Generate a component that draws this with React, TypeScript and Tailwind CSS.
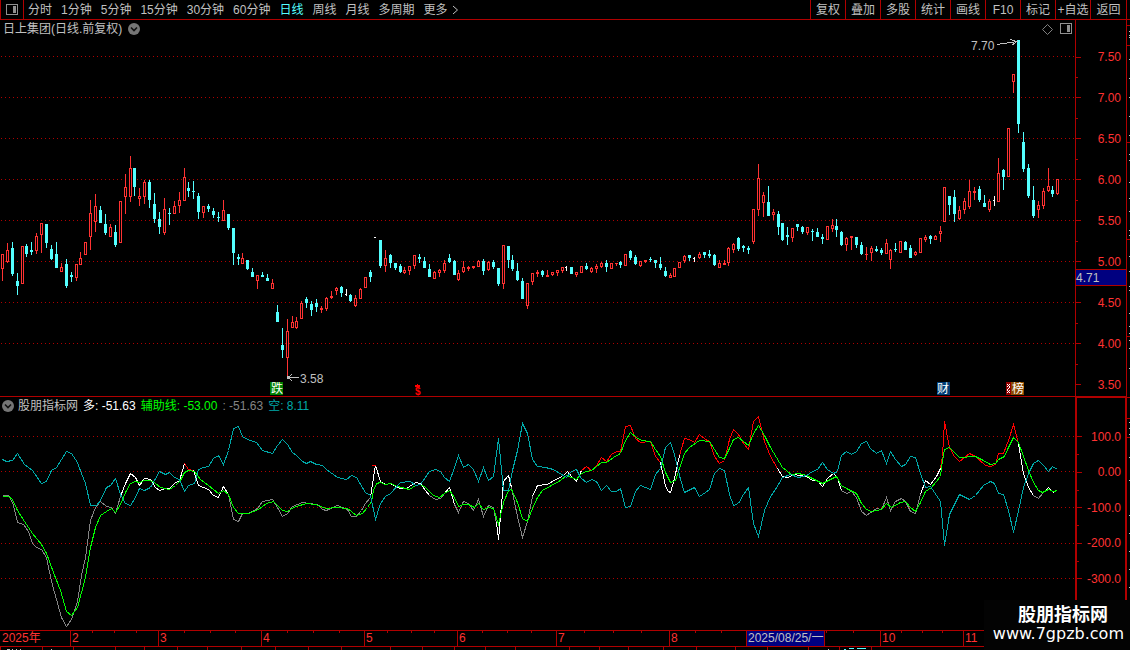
import React from "react";

type Kind = "up" | "down" | "flat";
// x, high, body top, body bottom, low
type Candle = [number, number, number, number, number];

const up: Candle[] = [
  [2, 254, 254, 268, 280], [7, 243, 250, 261, 262], [22, 246, 246, 283, 283], [36, 233, 236, 250, 253], [41, 223, 223, 234, 252],
  [61, 263, 267, 271, 271], [76, 264, 264, 277, 280], [80, 252, 258, 264, 264], [85, 242, 242, 254, 254], [90, 200, 213, 236, 249],
  [95, 194, 206, 221, 231], [110, 224, 227, 236, 236], [120, 201, 201, 242, 242], [125, 174, 187, 196, 213], [130, 156, 168, 196, 201],
  [139, 188, 196, 198, 205], [144, 180, 182, 196, 203], [164, 198, 209, 232, 234], [174, 201, 206, 213, 213], [179, 192, 200, 205, 212],
  [184, 168, 177, 200, 200], [203, 206, 206, 212, 217], [223, 200, 210, 220, 220], [242, 253, 258, 263, 263], [257, 275, 275, 280, 288],
  [272, 279, 283, 288, 288], [287, 319, 331, 357, 375], [292, 316, 322, 327, 327], [296, 317, 321, 327, 328], [301, 301, 303, 318, 318],
  [321, 306, 308, 309, 312], [326, 297, 298, 308, 310], [331, 291, 296, 297, 298], [336, 287, 288, 290, 294], [355, 295, 298, 305, 306],
  [360, 288, 289, 298, 298], [365, 277, 277, 287, 287], [385, 250, 258, 265, 271], [404, 267, 270, 272, 273], [409, 266, 266, 270, 274],
  [414, 255, 255, 265, 268], [434, 271, 272, 278, 278], [439, 269, 270, 272, 276], [444, 260, 263, 270, 272], [458, 270, 273, 279, 280],
  [463, 261, 267, 271, 272], [468, 266, 267, 268, 270], [473, 266, 266, 267, 268], [478, 260, 261, 266, 266], [488, 261, 262, 269, 270],
  [503, 245, 245, 283, 288], [527, 283, 283, 305, 308], [532, 273, 273, 281, 284], [537, 270, 272, 273, 276], [547, 270, 275, 276, 276],
  [552, 272, 272, 274, 275], [557, 270, 270, 272, 275], [562, 267, 267, 270, 272], [576, 272, 272, 274, 276], [581, 266, 266, 272, 272],
  [591, 267, 268, 271, 272], [596, 264, 266, 268, 272], [601, 262, 263, 266, 267], [611, 263, 263, 268, 268], [616, 263, 263, 263, 265],
  [625, 254, 254, 265, 265], [640, 261, 261, 265, 266], [645, 260, 260, 261, 262], [670, 273, 275, 277, 277], [674, 268, 268, 276, 276],
  [679, 262, 262, 267, 267], [684, 255, 256, 260, 262], [699, 252, 254, 257, 258], [719, 260, 263, 267, 267], [724, 260, 263, 264, 264],
  [728, 247, 248, 262, 265], [733, 243, 244, 249, 252], [753, 209, 209, 241, 243], [758, 164, 178, 209, 215], [763, 192, 195, 202, 216],
  [773, 209, 212, 214, 219], [792, 228, 228, 237, 241], [807, 227, 227, 232, 234], [827, 226, 226, 239, 239], [832, 219, 225, 228, 231],
  [846, 237, 238, 244, 250], [851, 236, 236, 237, 249], [866, 247, 254, 254, 259], [871, 246, 248, 252, 260], [886, 239, 243, 253, 253],
  [890, 249, 250, 259, 268], [900, 241, 241, 252, 252], [915, 251, 252, 254, 255], [920, 238, 238, 252, 252], [925, 235, 237, 239, 241],
  [935, 235, 236, 239, 239], [940, 226, 231, 233, 241], [944, 187, 187, 221, 221], [959, 206, 210, 218, 219], [964, 198, 201, 209, 213],
  [969, 180, 191, 206, 208], [974, 187, 191, 192, 199], [989, 199, 201, 209, 211], [998, 158, 173, 201, 201], [1008, 128, 128, 176, 176],
  [1013, 74, 74, 81, 92], [1038, 201, 205, 209, 217], [1043, 188, 191, 205, 208], [1048, 168, 186, 190, 191], [1057, 179, 179, 193, 194],
];

const down: Candle[] = [
  [12, 242, 248, 273, 275], [17, 273, 281, 285, 294], [26, 244, 246, 253, 256], [31, 242, 250, 251, 254], [46, 224, 224, 242, 247],
  [51, 245, 249, 258, 259], [56, 242, 254, 267, 267], [66, 259, 264, 285, 287], [71, 272, 275, 276, 281], [100, 206, 210, 222, 222],
  [105, 214, 224, 232, 234], [115, 225, 232, 244, 246], [134, 168, 168, 186, 195], [149, 180, 182, 199, 207], [154, 193, 204, 218, 222],
  [159, 212, 219, 226, 233], [169, 208, 213, 213, 224], [188, 182, 188, 190, 196], [193, 181, 191, 191, 198], [198, 193, 196, 211, 218],
  [208, 204, 206, 208, 211], [213, 208, 211, 214, 217], [218, 212, 217, 217, 221], [228, 214, 214, 227, 229], [233, 228, 228, 252, 264],
  [238, 254, 257, 258, 264], [247, 260, 260, 268, 269], [252, 268, 272, 276, 276], [262, 272, 275, 276, 276], [267, 274, 278, 280, 280],
  [277, 305, 312, 321, 321], [282, 328, 345, 349, 357], [306, 297, 299, 302, 307], [311, 301, 304, 309, 315], [316, 299, 303, 306, 311],
  [341, 286, 287, 292, 296], [350, 294, 295, 300, 301], [370, 270, 272, 276, 281], [380, 240, 240, 265, 267], [390, 254, 255, 262, 267],
  [395, 263, 263, 267, 269], [400, 264, 266, 271, 272], [419, 254, 257, 258, 262], [424, 257, 261, 267, 267], [429, 264, 269, 276, 276],
  [449, 254, 258, 261, 262], [454, 260, 261, 274, 274], [483, 259, 261, 270, 274], [493, 260, 262, 266, 268], [498, 268, 268, 283, 285],
  [508, 246, 246, 259, 267], [512, 255, 260, 268, 270], [517, 263, 271, 279, 280], [522, 278, 281, 298, 298], [542, 270, 271, 274, 276],
  [571, 267, 267, 273, 273], [586, 263, 266, 268, 269], [606, 260, 263, 266, 271], [620, 261, 262, 264, 267], [630, 250, 251, 257, 259],
  [635, 255, 257, 263, 264], [650, 257, 259, 259, 261], [655, 260, 260, 262, 267], [660, 257, 264, 267, 269], [665, 267, 271, 275, 276],
  [689, 255, 255, 257, 260], [704, 252, 252, 254, 257], [709, 250, 254, 255, 257], [714, 254, 255, 264, 265], [738, 237, 238, 248, 250],
  [743, 245, 246, 247, 251], [748, 246, 248, 249, 253], [768, 186, 202, 215, 215], [778, 211, 214, 226, 234], [782, 223, 223, 239, 240],
  [787, 227, 235, 236, 244], [797, 224, 224, 226, 230], [802, 226, 227, 231, 233], [812, 229, 231, 231, 240], [817, 228, 232, 236, 236],
  [822, 234, 237, 238, 243], [836, 219, 226, 229, 236], [841, 231, 232, 244, 245], [856, 237, 237, 244, 247], [861, 242, 245, 253, 254],
  [876, 246, 249, 250, 251], [881, 248, 250, 252, 254], [895, 243, 249, 249, 251], [905, 241, 242, 249, 249], [910, 245, 248, 257, 257],
  [930, 235, 236, 238, 243], [949, 196, 196, 204, 214], [954, 190, 197, 213, 221], [979, 186, 189, 199, 201], [984, 195, 203, 206, 206],
  [1003, 169, 170, 176, 189], [1018, 40, 40, 123, 132], [1023, 132, 142, 168, 171], [1028, 164, 168, 195, 197], [1033, 186, 200, 215, 217],
  [1052, 186, 190, 193, 196],
];

const flat: Candle[] = [
  [346, 289, 294, 294, 295], [375, 237, 237, 237, 237], [566, 266, 267, 267, 270],
  [694, 257, 258, 258, 261], [994, 196, 200, 200, 205],
];

const SHORT_LINE =
  "2,459 6,461 12,460 17,453 24,464 32,470 41,483 46,481 51,470 56,467 61,459 66,451 71,453 77,462 81,473 85,483 90,505 96,505 100,500 106,487 110,485 115,478 120,494 125,503 130,505 135,497 139,488 144,490 150,487 159,471 165,474 169,472 174,477 179,479 184,491 188,485 194,483 198,469 203,467 208,466 213,458 218,455 223,464 228,450 233,428 238,426 242,436 247,439 256,442 262,450 272,453 277,445 282,439 287,444 292,452 296,455 302,461 306,463 310,461 316,464 322,465 326,469 337,477 346,479 351,475 356,477 365,492 370,495 375,519 380,503 385,496 390,493 400,482 410,481 415,485 420,484 429,471 435,469 440,471 444,477 449,481 454,467 458,455 463,467 468,464 473,469 478,481 483,467 488,480 493,476 498,438 503,490 508,490 512,470 517,450 522,423 527,433 532,459 537,466 545,467 553,469 566,477 571,471 576,469 580,477 586,482 591,479 596,481 601,490 606,485 611,491 616,491 620,488 625,507 630,506 635,491 640,485 650,489 655,474 660,468 665,447 670,442 674,454 680,479 684,492 694,487 699,496 705,492 709,489 714,473 719,468 724,470 729,494 733,505 738,503 743,494 748,487 753,523 758,536 764,510 770,496 775,489 782,477 790,474 798,477 806,475 812,471 817,469 822,462 827,469 833,473 837,471 841,455 846,451 851,454 856,451 861,443 866,441 870,448 876,453 881,450 886,463 890,451 895,459 901,466 905,464 910,456 915,457 920,473 925,487 930,486 940,501 944,545 949,514 955,502 959,494 969,499 975,495 983,485 990,481 994,483 998,493 1003,494 1008,510 1013,532 1018,510 1023,487 1028,473 1033,463 1038,460 1043,465 1048,471 1052,466 1057,469";

const AUX_LINE =
  "2,496 8,496 12,499 17,510 24,521 32,533 41,544 46,553 53,572 60,590 66,611 71,615 77,607 85,577 90,547 95,527 100,515 106,511 111,508 115,512 120,504 125,492 130,483 135,481 139,482 144,480 150,480 155,483 160,487 169,489 175,485 180,480 184,472 188,470 194,471 200,479 208,485 218,493 223,490 228,494 233,507 238,513 248,513 258,509 266,503 273,501 277,505 282,510 287,511 293,507 306,503 315,504 326,508 336,507 347,508 356,515 362,513 367,507 371,501 373,490 376,483 380,482 385,484 390,483 397,486 409,489 415,485 420,484 425,487 433,495 439,497 444,493 449,490 454,497 458,506 463,504 468,504 474,507 478,503 483,509 488,507 493,508 498,524 503,502 508,490 511,489 517,502 522,518 527,521 532,508 537,497 542,490 551,485 560,480 566,475 576,479 581,473 586,471 591,470 601,462 606,462 613,457 620,453 625,440 630,432 636,437 641,440 650,441 655,449 660,456 665,472 670,482 675,480 679,468 684,453 689,447 699,440 709,441 714,449 719,457 724,458 729,448 733,439 738,437 748,445 753,433 758,425 764,435 770,447 782,467 791,474 798,473 806,475 822,483 836,476 841,485 846,488 856,493 861,503 866,509 871,511 881,509 886,503 891,507 900,502 905,501 910,507 915,511 920,502 925,491 931,487 940,476 942,460 944,449 949,447 954,452 959,457 975,456 981,459 990,464 995,463 998,459 1004,456 1008,447 1013,437 1018,442 1023,456 1028,470 1033,482 1038,490 1042,492 1048,489 1053,491 1057,490";

const GRAY = "#848484";
const WHITE = "#ffffff";
const RED = "#ff0000";

const longSegments: { color: string; points: string }[] = [
  { color: GRAY, points: "2,495 8,495 12,502 15,513 17,522 23,524 28,531 32,543 36,547 41,549 46,557 51,581 61,617 66,626 71,619 77,601 81,575 85,557 90,520 95,507 100,501 106,506 111,507 115,513 120,496" },
  { color: WHITE, points: "120,496 125,483 130,473 135,477 139,485 144,478 150,479 155,487 159,490 165,488 169,488 174,483 179,480 182,470 184,463" },
  { color: RED, points: "184,463 188,469 193,470" },
  { color: WHITE, points: "193,470 198,485 203,487 208,489 213,495 218,497 223,486 228,494" },
  { color: GRAY, points: "228,494 233,519 238,521 242,513 248,513 257,508 262,501 272,499 277,507 282,516 287,513 292,506 302,502 308,503 317,504 322,509 326,510 337,505 342,507 347,509 351,516 356,516 361,510 365,503 370,497" },
  { color: WHITE, points: "370,497 373,477 375,465 380,481 385,484 390,483 397,487 401,488 406,488 415,482 420,483 425,490 429,495" },
  { color: GRAY, points: "429,495 435,499 440,498 444,493" },
  { color: WHITE, points: "444,493 449,487 454,504" },
  { color: GRAY, points: "454,504 458,512 463,501 468,503 473,510 478,499 483,516 488,505 493,507 497,529" },
  { color: WHITE, points: "496,522 498,539 503,481 508,475 511,487" },
  { color: GRAY, points: "511,487 513,497 517,516 522,537 527,521 532,496" },
  { color: WHITE, points: "532,496 537,485 547,484 555,479 562,476 567,471 571,476 576,481 581,470" },
  { color: RED, points: "581,470 586,466 591,470 596,465 601,457 606,461 611,454 616,451 620,451 625,426 630,425 635,438 640,442 650,441 655,456 660,462" },
  { color: WHITE, points: "660,462 663,476 665,486 668,491 670,492 674,478 679,455" },
  { color: RED, points: "679,455 684,438 689,439 694,442 699,434 705,439 709,441 714,456 719,463 724,460 729,439 733,429 738,434 743,443 748,449 753,421 758,416 764,441 770,456 777,468" },
  { color: WHITE, points: "777,468 782,476 788,477 793,474 806,476 812,480 817,480 822,486 827,478 833,473 837,477 841,490" },
  { color: GRAY, points: "841,490 846,493 851,491 856,497 861,511 866,515 876,508 881,509 886,497 890,510 895,501 901,498 905,501 910,511 915,513 920,494" },
  { color: WHITE, points: "920,494 925,480 930,484 936,476 940,468" },
  { color: RED, points: "940,468 942,456 944,421 949,447 954,456 959,461 969,453 975,456 985,465 990,466 995,464 998,453 1003,453 1008,440 1013,424 1018,443" },
  { color: WHITE, points: "1018,443 1023,473 1028,487 1033,495" },
  { color: GRAY, points: "1033,495 1038,498 1043,492" },
  { color: WHITE, points: "1043,492 1048,487 1053,492 1057,489" },
];

const CandleMark = ({ data, kind }: { data: Candle; kind: Kind }) => {
  const [x, high, top, bottom, low] = data;
  const color = kind === "up" ? "#ff3232" : kind === "down" ? "#54ffff" : "#ffffff";
  return (
    <g fill={color}>
      <rect x={x} y={high} width={1} height={low - high + 1} />
      <rect x={x - 1} y={top} width={kind === "flat" ? 2 : 3} height={bottom - top + 1} />
      {kind === "up" && bottom - top > 1 && (
        <rect x={x} y={top + 1} width={1} height={bottom - top - 1} fill="#000" />
      )}
    </g>
  );
};

const GridLines = ({ rows }: { rows: number[] }) => (
  <g stroke="#b00000" strokeDasharray="1 3">
    {rows.map((y) => (
      <line key={y} x1={1} x2={1075} y1={y + 0.5} y2={y + 0.5} />
    ))}
  </g>
);

const Axis = ({ labels, className }: { labels: string[]; className: string }) => (
  <ul className={"flex h-full flex-col justify-between " + className}>
    {labels.map((label, i) => (
      <li key={i} className="flex h-3 items-center justify-between leading-3">
        <span className={label ? "h-px w-[5px] bg-[#b00000]" : "h-px w-0.5 bg-[#b00000]"} />
        <span>{label}</span>
      </li>
    ))}
  </ul>
);

const PanelIcon = () => (
  <svg width="13" height="12" viewBox="0 0 13 12" shapeRendering="crispEdges" aria-hidden="true">
    <rect x="0.5" y="0.5" width="11" height="10" rx="1" fill="none" stroke="#909090" />
    <rect x="7" y="2" width="3" height="7" fill="#909090" />
  </svg>
);

const RoundChevron = () => (
  <svg width="12" height="12" viewBox="0 0 12 12" aria-hidden="true">
    <circle cx="6" cy="6" r="6" fill="#757575" />
    <path d="M3 4.5 6 7.5 9 4.5" fill="none" stroke="#101010" strokeWidth="1.6" />
  </svg>
);

const periods = ["分时", "1分钟", "5分钟", "15分钟", "30分钟", "60分钟", "日线", "周线", "月线", "多周期"];
const tools = ["复权", "叠加", "多股", "统计", "画线", "F10", "标记", "+自选", "返回"];
const months = ["2025年", "2", "3", "4", "5", "6", "7", "8"];
const minorTicks = [92, 114, 136, 184, 210, 235, 287, 313, 339, 387, 411, 434, 482, 507, 531, 584, 613, 641, 695, 721, 826, 853, 901, 922, 942];
const lowerTicks = [0, 42, 73, 115, 144, 177, 207, 241, 275, 308, 341, 390, 422, 454, 485, 515, 569, 599, 628, 663, 696, 735, 767, 808, 839, 871];
const sideTicks = [31, 35, 37, 59, 78, 97, 116, 135, 154, 160, 182, 198, 211, 230, 235, 256, 271, 286, 290, 313, 326, 333, 340, 348, 368, 422, 428, 434, 457, 480, 515, 533, 551, 569, 587];

export default function App() {
  return (
    <div className="relative flex min-h-screen flex-col overflow-hidden bg-black font-['Liberation_Sans','Noto_Sans_CJK_SC',sans-serif] text-xs leading-3 text-[#c0c0c0]">
      <header className="flex h-5 items-stretch justify-between border-b border-[#b00000] pr-[3px]">
        <nav className="flex items-stretch gap-[9px]" aria-label="周期">
          <button aria-label="侧栏" className="-mr-[5px] flex w-6 items-center justify-center border-x border-[#b00000]">
            <PanelIcon />
          </button>
          {periods.map((p) => (
            <button key={p} className={p === "日线" ? "whitespace-nowrap text-[#54ffff]" : "whitespace-nowrap"}>
              {p}
            </button>
          ))}
          <button className="flex items-center gap-1 whitespace-nowrap">
            更多
            <svg width="7" height="10" viewBox="0 0 7 10" aria-hidden="true">
              <path d="M1 1 5.5 5 1 9" fill="none" stroke="#c0c0c0" />
            </svg>
          </button>
        </nav>
        <div className="flex items-stretch border-r border-[#b00000]">
          {tools.map((t) => (
            <button key={t} className="w-[35px] whitespace-nowrap border-l border-[#b00000] last:w-9">
              {t}
            </button>
          ))}
        </div>
      </header>

      <div className="flex">
        <main className="min-w-0 flex-1">
          <section className="border-b border-[#b00000]">
            <div className="flex h-[18px] items-center justify-between pl-[3px] pr-0.5">
              <div className="flex items-center gap-1.5">
                <h1>日上集团(日线.前复权)</h1>
                <button aria-label="展开"><RoundChevron /></button>
              </div>
              <div className="flex items-center gap-[7px]">
                <svg width="11" height="11" viewBox="0 0 11 11" aria-hidden="true">
                  <path d="M5.5 0.5 10.5 5.5 5.5 10.5 0.5 5.5Z" fill="none" stroke="#808080" />
                </svg>
                <PanelIcon />
              </div>
            </div>
            <svg viewBox="0 38 1075 358" className="block h-auto w-full" role="img" aria-label="日线" shapeRendering="crispEdges">
              <GridLines rows={[56, 97, 138, 179, 220, 261, 302, 343]} />
              {up.map((c) => <CandleMark key={c[0]} data={c} kind="up" />)}
              {down.map((c) => <CandleMark key={c[0]} data={c} kind="down" />)}
              {flat.map((c) => <CandleMark key={c[0]} data={c} kind="flat" />)}
              <g fill="none" stroke="#c0c0c0">
                <path d="M997 44.5 1017 41.5M1010 39.5 1017 41.5 1012 45" />
                <path d="M288 377.5H299M292 374 288 377.5 292 381" />
              </g>
              <rect x="287" y="376" width="3" height="3" fill="#c0c0c0" />
              <g fontSize="12" fill="#c0c0c0">
                <text x="971" y="50">7.70</text>
                <text x="300" y="383">3.58</text>
              </g>
              <rect x="270" y="382" width="13" height="13" fill="#008000" />
              <rect x="937" y="382" width="13" height="13" fill="#003c74" />
              <rect x="1006" y="382" width="5" height="13" fill="#900000" />
              <path d="M1007 384 1010 387 1007 390 1010 393M1010 384 1007 387M1010 390 1007 393" stroke="#fff" fill="none" />
              <rect x="1011" y="382" width="13" height="13" fill="#8c4a00" />
              <g fontSize="12" fill="#fff">
                <text x="271" y="393">跌</text>
                <text x="937" y="393">财</text>
                <text x="1012" y="393">榜</text>
              </g>
              <text x="415" y="395" fontSize="10" fontWeight="700" fill="#ff0000">$</text>
              <path d="M417 384H418V385H420V387H415V385H417Z" fill="#ff0000" />
            </svg>
          </section>

          <section>
            <div className="flex h-[18px] items-center gap-[5px] whitespace-nowrap pl-0.5">
              <div className="flex items-center gap-1">
                <button aria-label="指标"><RoundChevron /></button>
                <h2>股朋指标网</h2>
              </div>
              <p className="text-white">多: -51.63</p>
              <p className="text-[#00ff00]">辅助线: -53.00</p>
              <p className="text-[#848484]">: -51.63</p>
              <p className="text-[#00a8a8]">空: 8.11</p>
            </div>
            <svg viewBox="0 415 1075 215" className="block h-auto w-full" role="img" aria-label="指标" shapeRendering="crispEdges">
              <GridLines rows={[436, 471, 507, 543, 578]} />
              <g fill="none" transform="translate(0.5 0.5)">
                {longSegments.map((s) => (
                  <polyline key={s.points} points={s.points} stroke={s.color} />
                ))}
                <polyline points="371,465 375,465" stroke="#ff0000" />
                <polyline points={AUX_LINE} stroke="#00ff00" />
                <polyline points={SHORT_LINE} stroke="#00a8a8" />
              </g>
            </svg>
          </section>
        </main>

        <aside className="flex w-[52px] flex-col text-[#ff3232]" aria-label="坐标">
          <div className="relative flex-[377] border border-t-0 border-[#b00000]">
            <Axis
              className="pb-[5px] pr-[5px] pt-[31px]"
              labels={["7.50", "", "7.00", "", "6.50", "", "6.00", "", "5.50", "", "5.00", "", "4.50", "", "4.00", "", "3.50"]}
            />
            <div className="absolute inset-x-0 top-[249px] flex h-[17px] items-center border-y border-[#b00000] bg-[#000080] text-[#c0c0c0]">
              4.71
            </div>
          </div>
          <div className="flex-[233] border-x-2 border-t border-[#b00000]">
            <Axis className="pb-[45px] pr-1 pt-[33px]" labels={["100.0", "", "0.00", "", "-100.0", "", "-200.0", "", "-300.0"]} />
          </div>
        </aside>

        <svg width="3" viewBox="0 20 3 610" preserveAspectRatio="none" shapeRendering="crispEdges" aria-hidden="true">
          {[25, 45, 142, 239, 336, 397, 418, 437].map((y) => <rect key={y} x="0" y={y} width="3" height="1" fill="#b00000" />)}
          {sideTicks.map((y) => <rect key={y} x="2" y={y} width="1" height="1" fill="#c0c0c0" />)}
        </svg>
      </div>

      <div className="relative border-y border-[#b00000]">
        <ol className="grid h-[15px] grid-cols-[70fr_88fr_103fr_103fr_93fr_99fr_113fr_77fr_78fr_56fr_83fr_167fr] items-stretch leading-[15px] text-[#ff3232]">
          {months.map((m, i) => (
            <li key={m} className={i ? "border-l border-[#b00000] pl-px" : "pl-0.5"}>{m}</li>
          ))}
          <li className="overflow-hidden whitespace-nowrap border-l border-[#b00000] bg-[#000080] pl-px text-[#c0c0c0]">2025/08/25/一</li>
          <li className="border-l border-[#b00000]" />
          <li className="border-l border-[#b00000] pl-px">10</li>
          <li className="border-l border-[#b00000] pl-px">11</li>
        </ol>
        <svg viewBox="0 0 1130 15" preserveAspectRatio="none" className="absolute inset-0 h-full w-full" shapeRendering="crispEdges" aria-hidden="true">
          {minorTicks.map((x) => <rect key={x} x={x} y="0" width="1" height="2" fill="#b00000" />)}
        </svg>
      </div>
      <svg viewBox="0 0 1130 3" className="block h-[3px] w-full" preserveAspectRatio="none" shapeRendering="crispEdges" aria-hidden="true">
        {lowerTicks.map((x) => <rect key={x} x={x} y="0" width="1" height="3" fill="#b00000" />)}
        <path d="M7 2.5H10M12 2.5H13M16 2.5H17M20 2.5H21M51 2.5H52M828 2.5H829" stroke="#c0c0c0" />
        <path d="M844 2.5H846M849 1.5H854M857 1.5H866" stroke="#54ffff" />
      </svg>

      <div className="absolute bottom-0 right-0 flex h-[50px] w-[146px] flex-col items-end whitespace-nowrap bg-[#030303] pr-1.5 pt-[5px] text-white">
        <p className="pr-4 text-lg font-bold leading-5">股朋指标网</p>
        <p className="font-['DejaVu_Sans',sans-serif] text-base leading-[18px] text-white">www.7gpzb.com</p>
      </div>
    </div>
  );
}
